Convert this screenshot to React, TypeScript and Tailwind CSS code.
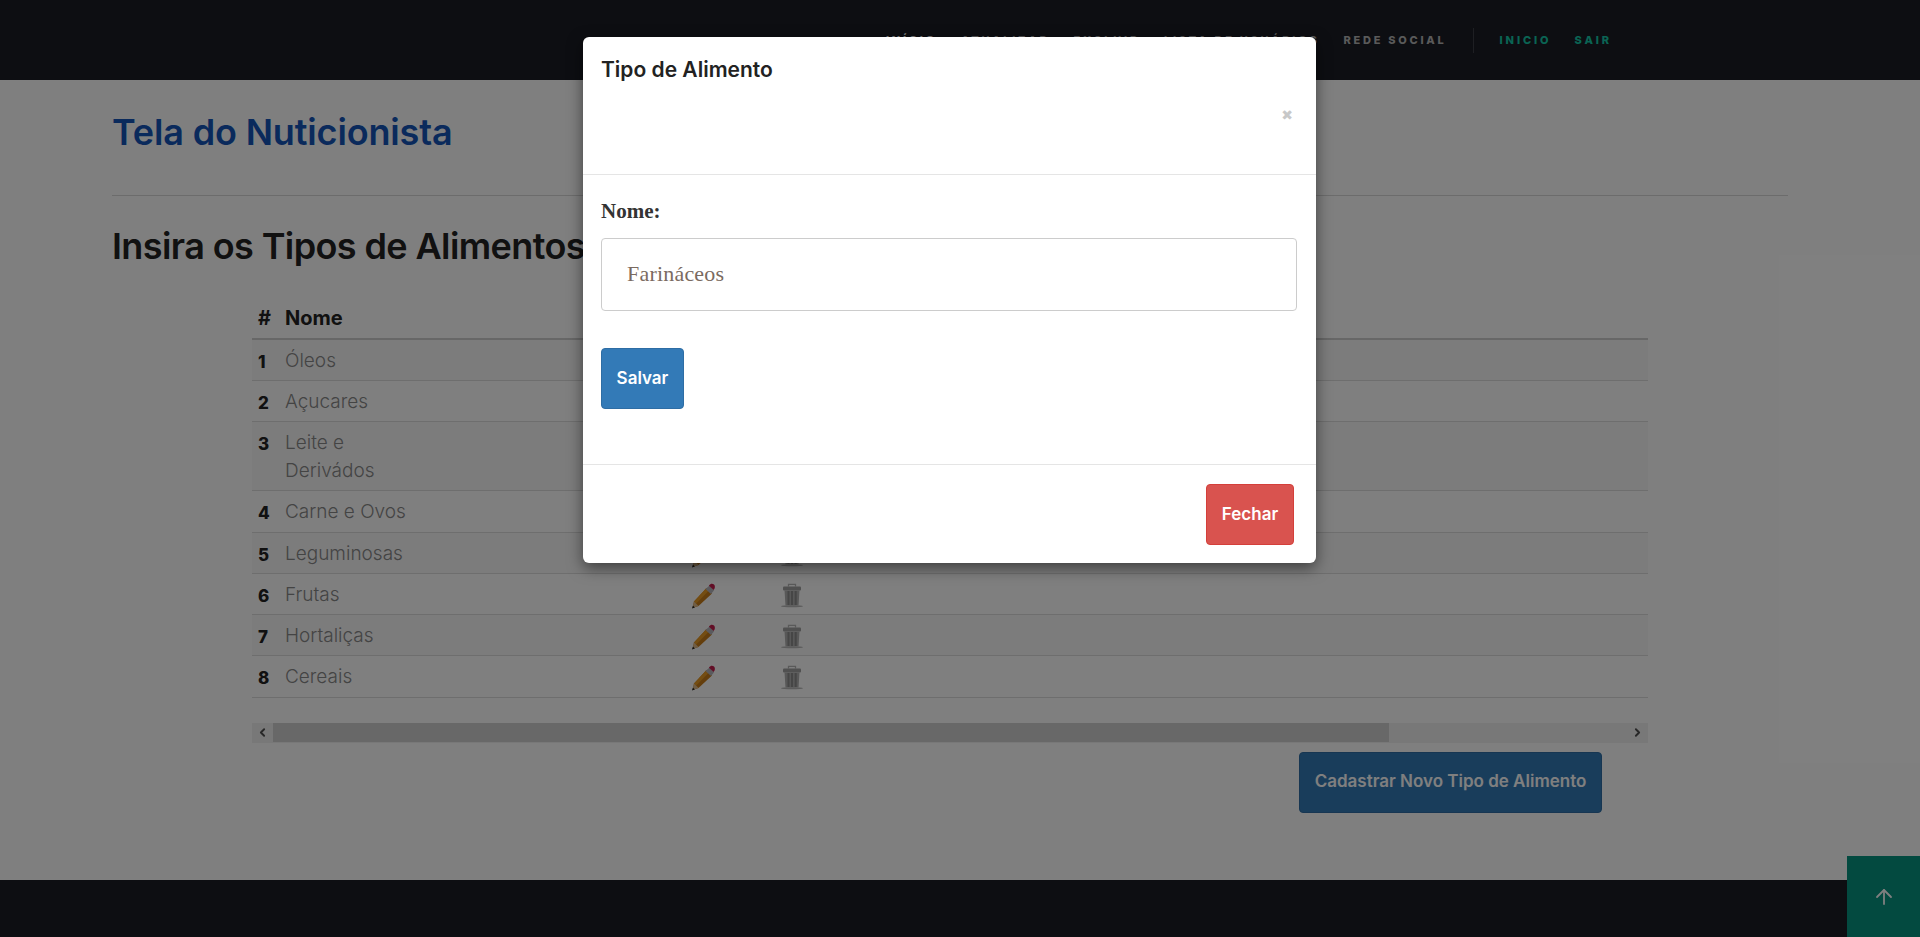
import { ArrowUp, ChevronLeft, ChevronRight } from "lucide-react";

const rows: { n: number; name: string[]; h: string }[] = [
  { n: 1, name: ["Óleos"], h: "h-[41px]" },
  { n: 2, name: ["Açucares"], h: "h-[41px]" },
  { n: 3, name: ["Leite e", "Derivádos"], h: "h-[69px]" },
  { n: 4, name: ["Carne e Ovos"], h: "h-[42px]" },
  { n: 5, name: ["Leguminosas"], h: "h-[41px]" },
  { n: 6, name: ["Frutas"], h: "h-[41px]" },
  { n: 7, name: ["Hortaliças"], h: "h-[41px]" },
  { n: 8, name: ["Cereais"], h: "h-[42px]" },
];

const navItems = ["INÍCIO", "ATUALIZAR", "EXCLUIR", "LISTA DE USUÁRIOS", "REDE SOCIAL"];

function Pencil() {
  return (
    <svg width="24" height="26" viewBox="0 0 24 26" className="block">
      <path d="M15.5 5 L21 10.5 L7.5 23 L1.5 25 L3 18.5 Z" fill="#c87c18" />
      <path d="M15.5 5 L18 7.5 L5 20.8 L3 18.5 Z" fill="#e89a24" />
      <path d="M3 18.5 L7.5 23 L1.5 25 Z" fill="#e0bc8c" />
      <path d="M2 22.6 L3.8 24.4 L1 25.4 Z" fill="#222" />
      <path d="M14.5 6 L18.5 2.5 L23 7.5 L20 11 Z" fill="#b4b4bc" />
      <path d="M18 2.5 C19.5 0.5 21.5 0.3 23 1.6 C24.3 3 24.2 5.2 22.6 7 L18 2.8 Z" fill="#c41c4c" />
    </svg>
  );
}

function Trash() {
  return (
    <svg width="24" height="25" viewBox="0 0 24 25" className="block">
      <path d="M8.5 3.5 V1.3 H15.5 V3.5" fill="none" stroke="#b4b4b4" strokeWidth="1.3" />
      <rect x="3" y="3.5" width="18" height="4" rx="1" fill="#a0a0a0" />
      <path d="M4.5 7.5 H19.5 L18.5 22.5 H5.5 Z" fill="#b0b0b0" />
      <rect x="7.5" y="8" width="2" height="14" fill="#8c8c8c" />
      <rect x="11" y="8" width="2" height="14" fill="#8c8c8c" />
      <rect x="14.7" y="8" width="2" height="14" fill="#8c8c8c" />
      <ellipse cx="12" cy="23.2" rx="11" ry="1" fill="#b8b8b8" />
    </svg>
  );
}

export default function App() {
  return (
    <div className="relative flex h-[937px] flex-col overflow-hidden bg-white font-['Inter',sans-serif]">
      <nav className="flex h-[80px] shrink-0 items-center justify-end bg-[#1a1c24] pr-[308px]">
        <ul className="flex items-center gap-[24px] text-[11px] font-extrabold tracking-[2.75px] text-[#b4b4b4]">
          {navItems.map((t) => (
            <li key={t} className={t === "INÍCIO" ? "text-white" : ""}>{t}</li>
          ))}
        </ul>
        <div className="mx-[26px] h-[25px] w-px bg-[#3c3e46]" />
        <ul className="flex items-center gap-[23px] text-[11px] font-extrabold tracking-[2.9px] text-[#14c8a8]">
          <li>INICIO</li>
          <li>SAIR</li>
        </ul>
      </nav>

      <main className="flex-1 pr-[132px] pl-[112px]">
        <h1 className="mt-[28px] text-[36px] leading-[48px] font-semibold tracking-[-0.15px] text-[#1455b8]">Tela do Nuticionista</h1>
        <hr className="mt-[39px] border-[#d8d8d8]" />
        <h2 className="mt-[26px] text-[36px] leading-[48px] font-semibold tracking-[-0.6px] text-[#222222]">Insira os Tipos de Alimentos</h2>

        <div className="mx-[140px] mt-[27px]">
          <table className="w-full table-fixed border-collapse text-left">
            <colgroup>
              <col className="w-[27px]" />
              <col className="w-[401px]" />
              <col className="w-[46px]" />
              <col />
            </colgroup>
            <thead>
              <tr className="h-[42px] border-b-2 border-[#cfcfcf] text-[20px] text-[#222]">
                <th className="pl-[6px] font-bold">#</th>
                <th className="pl-[6px] font-bold">Nome</th>
                <th />
                <th />
              </tr>
            </thead>
            <tbody>
              {rows.map((r) => (
                <tr key={r.n} className={`${r.h} border-b border-[#dddddd] ${r.n % 2 === 1 ? "bg-[#f9f9f9]" : "bg-white"}`}>
                  <td className="pl-[6px] align-top pt-[8px] text-[17px] leading-[28px] font-extrabold text-[#222]">{r.n}</td>
                  <td className="pl-[6px] align-top pt-[7px] text-[19px] leading-[28px] font-light text-[#888888]">
                    {r.name.map((l, i) => (
                      <div key={i}>{l}</div>
                    ))}
                  </td>
                  <td className="pt-[4px] align-middle">
                    <div className="flex justify-center"><Pencil /></div>
                  </td>
                  <td className="pt-[3px] pl-[54px] align-middle"><Trash /></td>
                </tr>
              ))}
            </tbody>
          </table>

          <div className="mt-[25px] flex h-[20px] bg-[#f1f1f1]">
            <div className="flex w-[21px] items-center justify-center text-[#505050]">
              <ChevronLeft size={13} strokeWidth={3.5} />
            </div>
            <div className="h-[19px] w-[1116px] bg-[#d0d0d0]" />
            <div className="flex-1" />
            <div className="flex w-[21px] items-center justify-center text-[#505050]">
              <ChevronRight size={13} strokeWidth={3.5} />
            </div>
          </div>

          <div className="mt-[9px] flex justify-end pr-[46px]">
            <button className="h-[61px] w-[303px] rounded-[4px] border border-[#2e6da4] bg-[#337ab7] text-[17px] font-semibold text-white">
              Cadastrar Novo Tipo de Alimento
            </button>
          </div>
        </div>
      </main>

      <footer className="h-[57px] shrink-0 bg-[#1a1c24]" />

      <div className="absolute right-0 bottom-0 flex h-[81px] w-[73px] items-center justify-center bg-[#069480] text-white">
        <ArrowUp size={24} strokeWidth={1.8} />
      </div>

      <div className="absolute inset-0 bg-black/50" />

      <div className="absolute top-[37px] left-[583px] flex h-[526px] w-[733px] flex-col rounded-[6px] bg-white shadow-[0_5px_15px_rgba(0,0,0,0.5)]">
        <div className="flex h-[138px] flex-col border-b border-[#e5e5e5] px-[18px]">
          <h4 className="mt-[19px] text-[21px] leading-[28px] font-semibold text-[#222]">Tipo de Alimento</h4>
          <div className="mt-[21px] self-end pr-[5px] font-['DejaVu_Sans',sans-serif] text-[14px] leading-[20px] font-bold text-[#c8c8c8]">✖</div>
        </div>
        <div className="flex h-[290px] flex-col border-b border-[#e5e5e5] px-[18px] font-['Liberation_Serif',serif]">
          <label className="mt-[22px] text-[21px] leading-[28px] font-bold text-[#333]">Nome:</label>
          <div className="mt-[13px] flex h-[73px] w-[696px] items-center rounded-[4px] border border-[#cccccc] pb-[2px] pl-[25px] text-[22px] tracking-[0.2px] text-[#7a6a60]">
            Farináceos
          </div>
          <button className="mt-[37px] h-[61px] w-[83px] rounded-[4px] border border-[#2e6da4] bg-[#337ab7] font-['Inter',sans-serif] text-[17px] font-semibold text-white">
            Salvar
          </button>
        </div>
        <div className="flex flex-1 items-start justify-end pt-[19px] pr-[22px]">
          <button className="h-[61px] w-[88px] rounded-[4px] border border-[#d43f3a] bg-[#d9534f] text-[17px] font-semibold text-white">
            Fechar
          </button>
        </div>
      </div>
    </div>
  );
}
